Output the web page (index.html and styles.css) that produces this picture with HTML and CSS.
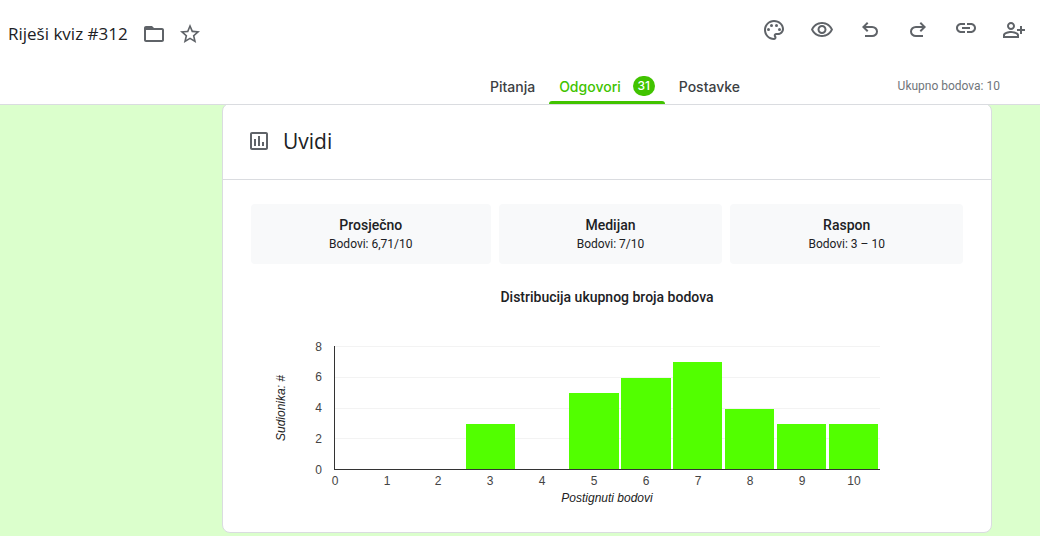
FILE: index.html
```html
<!DOCTYPE html>
<html lang="hr">
<head>
<meta charset="utf-8">
<title>Riješi kviz #312</title>
<link rel="stylesheet" href="styles.css">
</head>
<body>
<header class="header">
  <div class="toolbar">
    <h1 class="title">Riješi kviz #312</h1>
    <button class="icon-button icon-button--small" aria-label="Premjesti u mapu"><svg class="icon" viewBox="0 0 24 24"><path d="M20 6h-8l-2-2H4c-1.1 0-2 .9-2 2v12c0 1.100.9 2 2 2h16c1.100 0 2-.9 2-2V8c0-1.100-.9-2-2-2zm0 12H4V8h16v10z"/></svg></button>
    <button class="icon-button icon-button--small" aria-label="Označi zvjezdicom"><svg class="icon" viewBox="0 0 24 24"><path d="M22 9.240l-7.190-.62L12 2 9.190 8.630 2 9.240l5.460 4.730L5.820 21 12 17.270 18.180 21l-1.630-7.030L22 9.240zM12 15.400l-3.760 2.270 1-4.280-3.320-2.880 4.380-.38L12 6.100l1.710 4.040 4.380.38-3.320 2.880 1 4.280L12 15.400z"/></svg></button>
    <div class="actions">
      <button class="icon-button" aria-label="Prilagodi temu"><svg class="icon" viewBox="0 0 24 24"><path d="M12 22C6.490 22 2 17.510 2 12S6.490 2 12 2s10 4.040 10 9c0 3.310-2.690 6-6 6h-1.770c-.28 0-.5.22-.5.5 0 .12.05.23.13.33.41.47.64 1.060.64 1.670 0 1.380-1.120 2.500-2.500 2.500zm0-18c-4.410 0-8 3.590-8 8s3.590 8 8 8c.28 0 .5-.22.5-.5 0-.16-.08-.28-.14-.35-.41-.46-.63-1.050-.63-1.650 0-1.380 1.120-2.500 2.500-2.500H16c2.210 0 4-1.790 4-4 0-3.860-3.590-7-8-7z"/><circle cx="6.500" cy="11.500" r="1.500"/><circle cx="9.500" cy="7.500" r="1.500"/><circle cx="14.500" cy="7.500" r="1.500"/><circle cx="17.500" cy="11.500" r="1.500"/></svg></button>
      <button class="icon-button" aria-label="Pregled"><svg class="icon" viewBox="0 0 24 24"><path d="M12 6c3.790 0 7.170 2.130 8.820 5.500C19.170 14.870 15.790 17 12 17s-7.170-2.130-8.820-5.500C4.830 8.130 8.210 6 12 6m0-2C7 4 2.730 7.110 1 11.500 2.730 15.890 7 19 12 19s9.270-3.110 11-7.500C21.270 7.110 17 4 12 4zm0 5c1.380 0 2.500 1.120 2.500 2.500S13.380 14 12 14s-2.500-1.120-2.500-2.500S10.620 9 12 9m0-2c-2.480 0-4.500 2.020-4.500 4.500S9.520 16 12 16s4.500-2.020 4.500-4.500S14.480 7 12 7z"/></svg></button>
      <button class="icon-button" aria-label="Poništi"><svg class="icon" viewBox="0 0 24 24"><path d="M7 19v-2h7.100q1.575 0 2.737-1T18 13.500 16.837 11 14.100 10H7.800l2.600 2.600L9 14 4 9l5-5 1.400 1.400L7.800 8h6.300q2.425 0 4.163 1.575T20 13.500t-1.737 3.925T14.100 19z"/></svg></button>
      <button class="icon-button" aria-label="Ponovi"><svg class="icon" viewBox="0 0 24 24"><path d="M9.900 19q-2.425 0-4.163-1.575T4 13.500t1.737-3.925T9.900 8h6.300l-2.600-2.600L15 4l5 5-5 5-1.400-1.400 2.600-2.600H9.900q-1.575 0-2.737 1T6 13.500 7.163 16 9.900 17H17v2z"/></svg></button>
      <button class="icon-button" aria-label="Kopiraj vezu"><svg class="icon" viewBox="0 0 24 24"><path d="M17 5h-4v2h4c1.650 0 3 1.350 3 3s-1.350 3-3 3h-4v2h4c2.760 0 5-2.240 5-5s-2.240-5-5-5zm-6 8H7c-1.650 0-3-1.350-3-3s1.350-3 3-3h4V5H7c-2.760 0-5 2.240-5 5s2.240 5 5 5h4v-2zm-3-4h8v2H8z"/></svg></button>
      <button class="icon-button" aria-label="Dodaj suradnike"><svg class="icon" viewBox="0 0 24 24"><path d="M9 12c2.210 0 4-1.790 4-4s-1.790-4-4-4-4 1.790-4 4 1.790 4 4 4zm0-6c1.100 0 2 .9 2 2s-.9 2-2 2-2-.9-2-2 .9-2 2-2zm0 7c-2.670 0-8 1.340-8 4v3h16v-3c0-2.660-5.330-4-8-4zm6 5H3v-.99C3.200 16.290 6.300 15 9 15s5.800 1.290 6 2v1zm5-7V8h-2v3h-3v2h3v3h2v-3h3v-2z"/></svg></button>
    </div>
  </div>
  <div class="subbar">
    <nav class="tabs">
      <button class="tab">Pitanja</button>
      <button class="tab tab--active">Odgovori <span class="count">31</span></button>
      <button class="tab">Postavke</button>
    </nav>
    <span class="total">Ukupno bodova: 10</span>
  </div>
</header>
<main class="page">
  <section class="card">
    <div class="card-head">
      <svg class="icon" viewBox="0 0 24 24"><path d="M19 3H5c-1.100 0-2 .9-2 2v14c0 1.100.9 2 2 2h14c1.100 0 2-.9 2-2V5c0-1.100-.9-2-2-2zm0 16H5V5h14v14zM7 10h2v7H7zm4-3h2v10h-2zm4 6h2v4h-2z"/></svg>
      <h2 class="card-title">Uvidi</h2>
    </div>
    <div class="card-body">
      <div class="stats">
        <div class="stat"><h3 class="stat-name">Prosječno</h3><p class="stat-value">Bodovi: 6,71/10</p></div>
        <div class="stat"><h3 class="stat-name">Medijan</h3><p class="stat-value">Bodovi: 7/10</p></div>
        <div class="stat"><h3 class="stat-name">Raspon</h3><p class="stat-value">Bodovi: 3 – 10</p></div>
      </div>
      <h3 class="chart-title">Distribucija ukupnog broja bodova</h3>
      <svg class="chart" viewBox="0 0 712 196" role="img" aria-label="Distribucija ukupnog broja bodova">
        <g class="grid">
          <rect x="84" y="30" width="545" height="1"/>
          <rect x="84" y="61" width="545" height="1"/>
          <rect x="84" y="92" width="545" height="1"/>
          <rect x="84" y="122" width="545" height="1"/>
        </g>
        <g class="bars">
          <rect x="215" y="108" width="49" height="45"/>
          <rect x="318" y="77" width="50" height="76"/>
          <rect x="370" y="62" width="50" height="91"/>
          <rect x="422" y="46" width="49" height="107"/>
          <rect x="474" y="93" width="49" height="60"/>
          <rect x="526" y="108" width="49" height="45"/>
          <rect x="578" y="108" width="49" height="45"/>
        </g>
        <g class="axis">
          <rect x="83" y="30" width="1" height="124"/>
          <rect x="83" y="153" width="546" height="1"/>
        </g>
        <g class="ticks ticks--y">
          <text x="71" y="35">8</text>
          <text x="71" y="65">6</text>
          <text x="71" y="96">4</text>
          <text x="71" y="127">2</text>
          <text x="71" y="158">0</text>
        </g>
        <g class="ticks">
          <text x="84" y="169">0</text>
          <text x="136" y="169">1</text>
          <text x="187" y="169">2</text>
          <text x="239" y="169">3</text>
          <text x="291" y="169">4</text>
          <text x="343" y="169">5</text>
          <text x="395" y="169">6</text>
          <text x="447" y="169">7</text>
          <text x="499" y="169">8</text>
          <text x="551" y="169">9</text>
          <text x="603" y="169">10</text>
        </g>
        <text class="axis-title" x="356" y="186">Postignuti bodovi</text>
        <text class="axis-title" transform="translate(34 92) rotate(-90)">Sudionika: #</text>
      </svg>
    </div>
  </section>
</main>
</body>
</html>
```
FILE: styles.css
```css
* { box-sizing: border-box; }
body {
  margin: 0;
  min-height: 100vh;
  background: #dbffcc;
  color: #202124;
  font-family: Roboto, "Liberation Sans", sans-serif;
}
h1, h2, h3, p { margin: 0; font-weight: 400; }
button {
  border: 0;
  padding: 0;
  background: none;
  font: inherit;
  color: inherit;
  cursor: pointer;
}
.header {
  position: relative;
  z-index: 1;
  background: #fff;
  border-bottom: 1px solid #dadce0;
}
.toolbar {
  display: flex;
  align-items: center;
  height: 68px;
  padding: 0 2px 0 8px;
}
.title {
  margin-right: 8px;
  font-family: "Open Sans", Roboto, sans-serif;
  font-size: 17px;
  line-height: 24px;
}
.icon {
  display: block;
  width: 24px;
  height: 24px;
  fill: #5f6368;
}
.icon-button {
  display: flex;
  align-items: center;
  justify-content: center;
  width: 48px;
  height: 48px;
}
.icon-button--small { width: 36px; height: 36px; }
.actions {
  display: flex;
  margin-left: auto;
  padding-bottom: 8px;
}
.subbar {
  display: grid;
  grid-template-columns: 1fr auto 1fr;
  align-items: center;
  height: 36px;
  padding: 0 40px 0 230px;
}
.tabs {
  grid-column: 2;
  display: flex;
  height: 100%;
}
.tab {
  display: flex;
  align-items: center;
  gap: 12px;
  padding: 3px 14px 0;
  border-bottom: 3px solid transparent;
  color: #3c4043;
  font-size: 14px;
  font-weight: 500;
}
.tab--active {
  position: relative;
  padding: 3px 10px 0;
  color: #41c300;
}
.tab--active::after {
  content: "";
  position: absolute;
  inset: auto 0 -3px;
  height: 3px;
  border-radius: 3px 3px 0 0;
  background: #41c300;
}
.count {
  width: 22px;
  border-radius: 11px;
  background: #41c300;
  color: #fff;
  font-size: 12px;
  line-height: 20px;
  text-align: center;
}
.tab { font-family: Inter, Roboto, sans-serif; }
.total {
  justify-self: end;
  color: #70757a;
  font-size: 12px;
}
.page { padding: 0 48px 3px 222px; }
.card {
  max-width: 770px;
  margin-top: -2px;
  border: 1px solid #dadce0;
  border-radius: 8px;
  background: #fff;
}
.card-head {
  display: flex;
  align-items: center;
  gap: 12px;
  height: 76px;
  padding: 0 24px 2px;
  border-bottom: 1px solid #dadce0;
}
.card-title {
  font-family: "Open Sans", Roboto, sans-serif;
  font-size: 21px;
  line-height: 30px;
}
.card-body { padding: 24px 28px 20px; }
.stats { display: flex; gap: 8px; }
.stat {
  flex: 1 1 auto;
  padding: 11px 0 12px;
  border-radius: 4px;
  background: #f8f9fa;
  text-align: center;
}
.stat-name {
  margin-bottom: 1px;
  font-size: 14px;
  font-weight: 500;
  line-height: 20px;
}
.stat-value { font-size: 12px; line-height: 16px; }
.chart-title {
  margin-top: 23px;
  font-size: 14px;
  font-weight: 500;
  line-height: 20px;
  text-align: center;
}
.chart {
  display: block;
  width: 100%;
  margin-top: 9px;
  font-family: "Liberation Sans", Arial, sans-serif;
  font-size: 12px;
}
.grid { fill: #f3f3f3; }
.bars { fill: #52ff00; }
.axis { fill: #333; }
.ticks { fill: #444; text-anchor: middle; }
.ticks--y { text-anchor: end; }
.axis-title {
  fill: #222;
  font-style: italic;
  text-anchor: middle;
}
```
